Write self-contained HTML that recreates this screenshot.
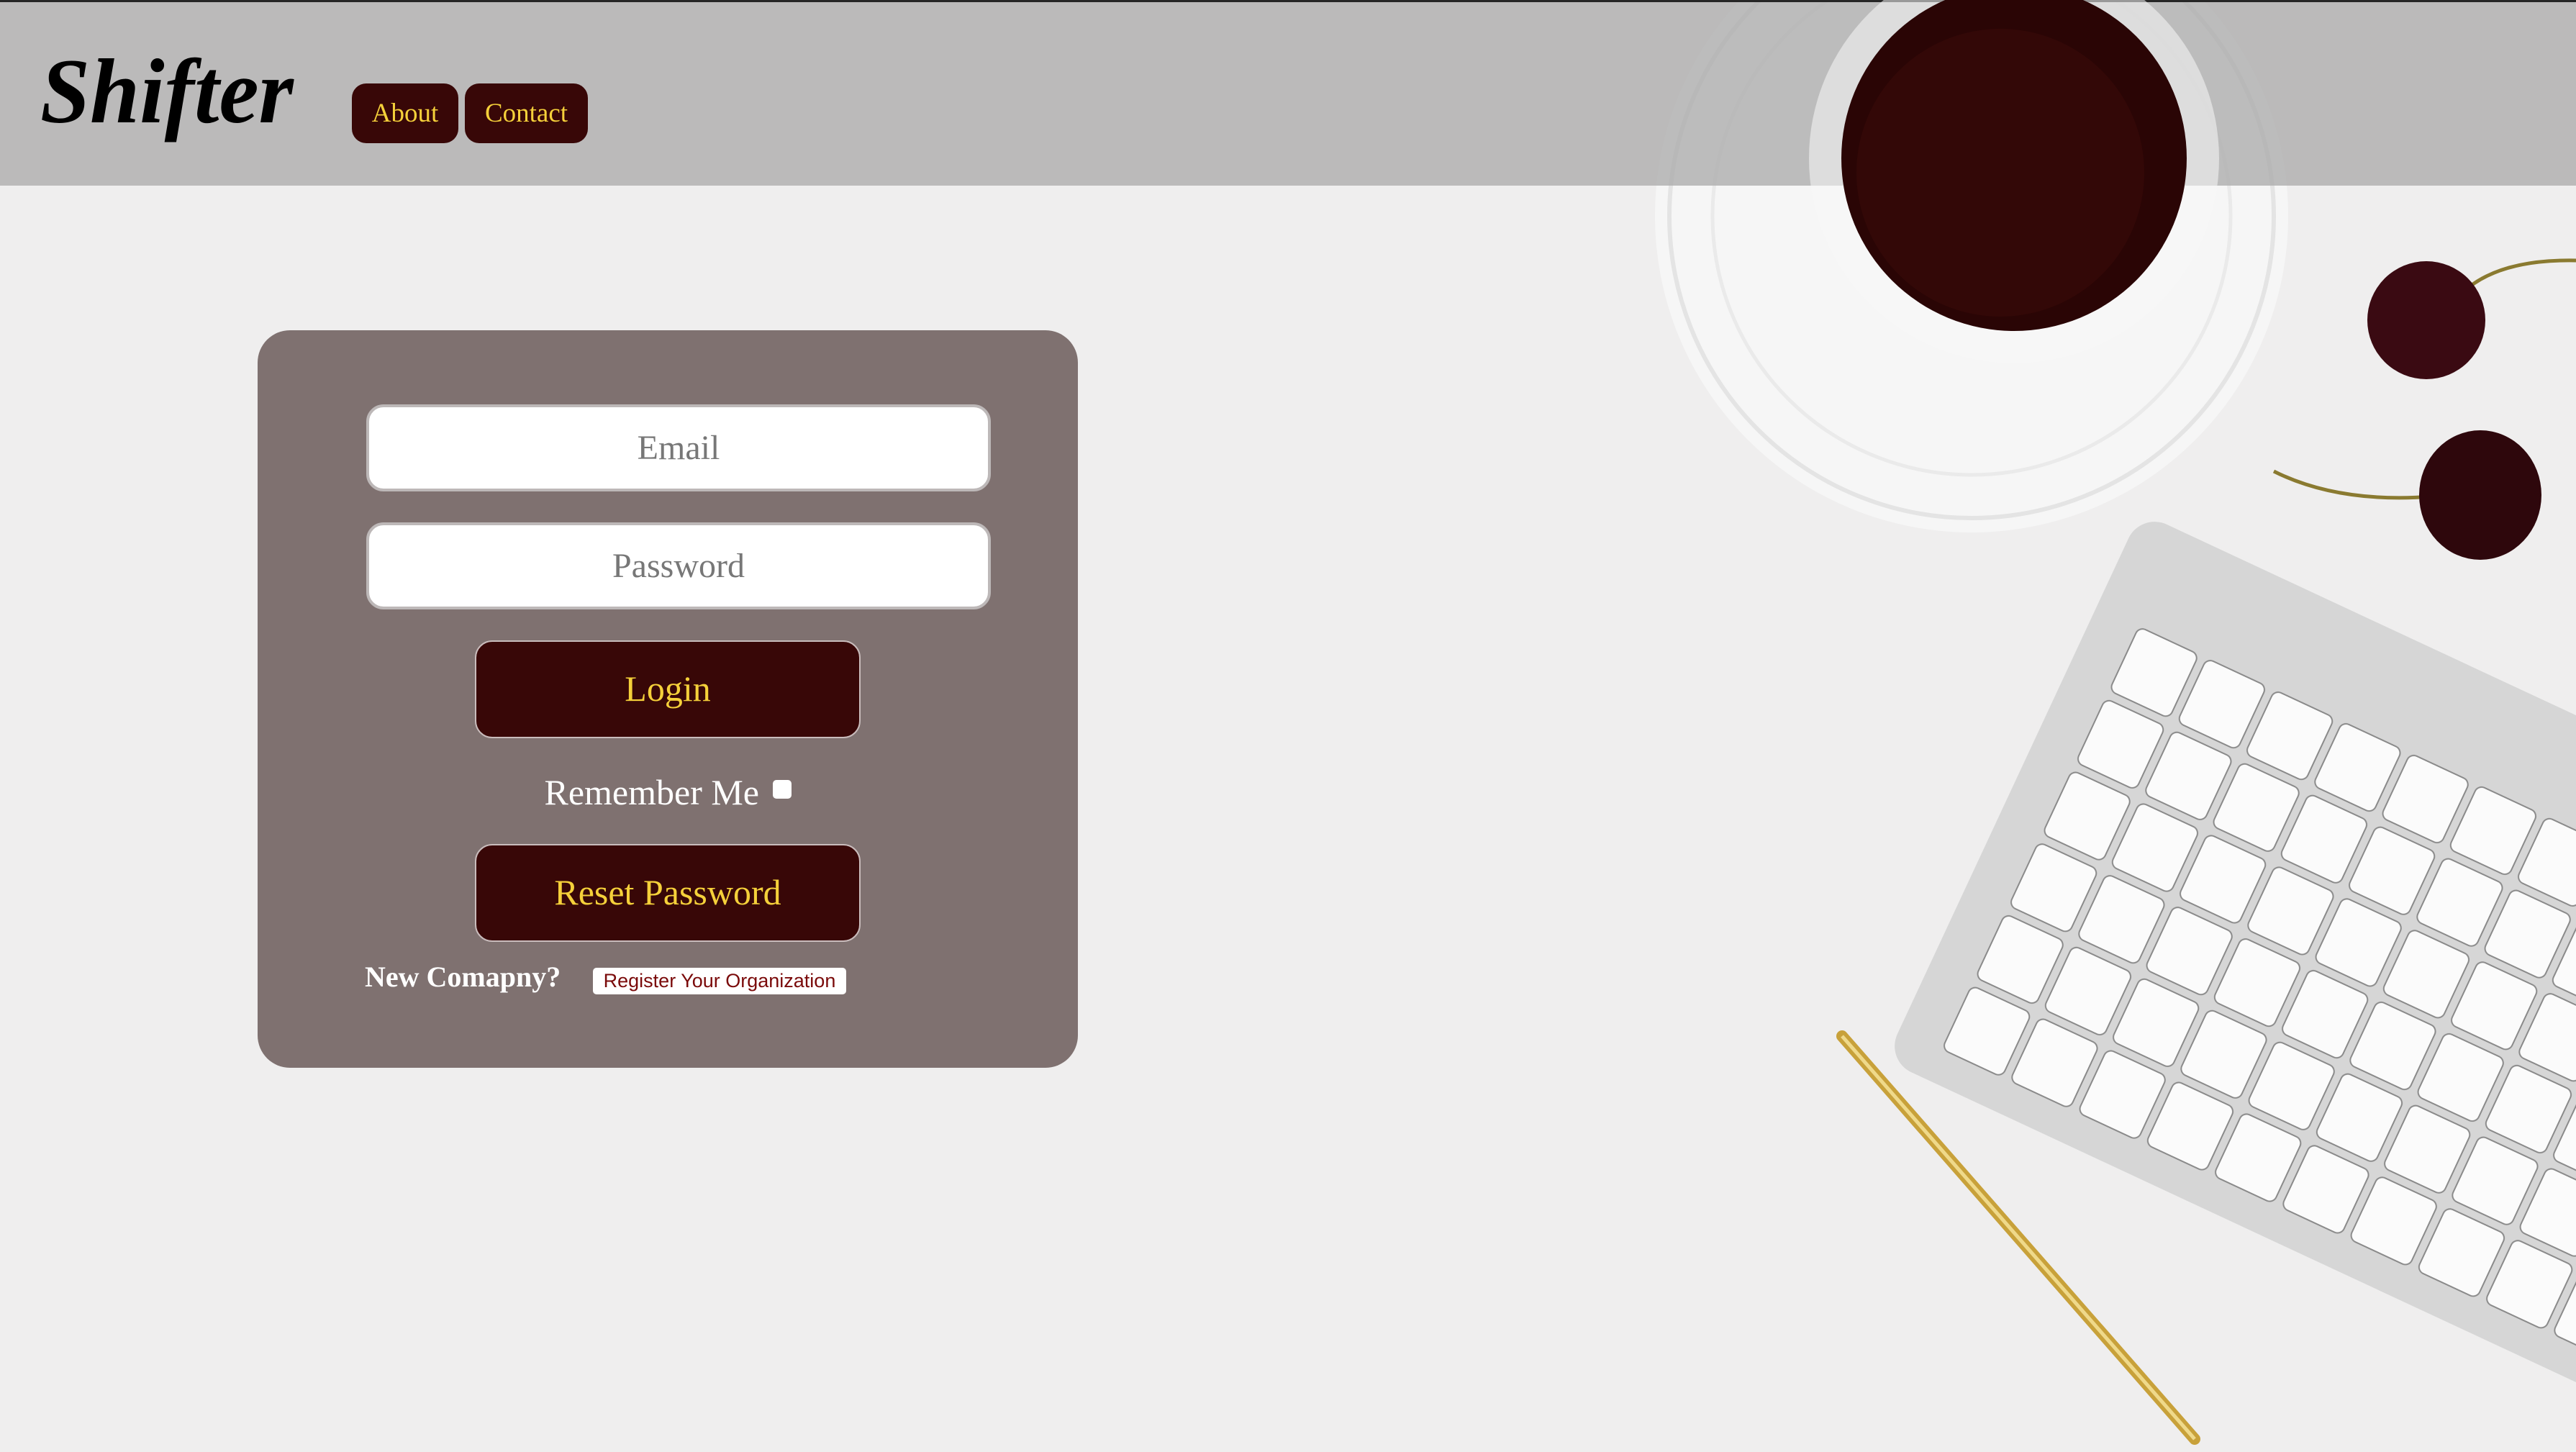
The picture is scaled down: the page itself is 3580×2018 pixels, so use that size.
<!DOCTYPE html>
<html><head><meta charset="utf-8">
<style>
html,body{margin:0;padding:0;width:3580px;height:2018px;overflow:hidden;background:#efeeee;font-family:"Liberation Serif",serif;position:relative}
svg{position:absolute;left:0;top:0;display:block}
.hdr{position:absolute;left:0;top:0;width:3580px;height:258px;background:rgba(172,172,172,0.78);border-top:3px solid #262626;box-sizing:border-box}
.logo{position:absolute;left:56px;top:52px;font:bold italic 128px "Liberation Serif",serif;color:#000;transform:scaleX(0.97);transform-origin:left;line-height:150px}
.nb{position:absolute;top:116px;height:83px;background:#380707;border-radius:20px;color:#f5d03a;font-size:37px;line-height:83px;text-align:center}
.box{position:absolute;left:358px;top:459px;width:1140px;height:1025px;background:#7f7170;border-radius:45px}
.inp{position:absolute;left:151px;width:868px;height:121px;background:#fff;border:4px solid #bdb8b8;box-sizing:border-box;border-radius:24px;text-align:center;color:#777;font-size:48px;line-height:113px}
.btn{position:absolute;left:302px;width:536px;height:136px;background:#380707;border:2px solid #c9bcbc;box-sizing:border-box;border-radius:24px;color:#f5d03a;font-size:50px;line-height:130px;text-align:center}
</style></head><body>
<svg width="3580" height="2018" viewBox="0 0 3580 2018">
<rect width="3580" height="2018" fill="#efeeee"/>
<circle cx="2740" cy="300" r="440" fill="#f6f6f6"/>
<circle cx="2740" cy="300" r="420" fill="none" stroke="#e4e4e4" stroke-width="6"/>
<circle cx="2740" cy="300" r="360" fill="none" stroke="#eaeaea" stroke-width="5"/>
<path d="M3430 400 Q3480 360 3580 362" stroke="#8a7a30" stroke-width="5" fill="none"/>
<ellipse cx="3372" cy="445" rx="82" ry="82" fill="#3a0a12"/>
<path d="M3160 655 Q3250 700 3380 690" stroke="#8a7a30" stroke-width="5" fill="none"/>
<ellipse cx="3447" cy="688" rx="85" ry="90" fill="#2e070c"/>
<g transform="translate(2975,712) rotate(25)">
<defs><pattern id="k" x="60" y="140" width="104" height="110" patternUnits="userSpaceOnUse"><rect x="5" y="5" width="92" height="98" rx="10" fill="#fbfbfb" stroke="#8a8a8a" stroke-width="2"/></pattern></defs>
<rect x="0" y="0" width="1800" height="840" rx="40" fill="#d6d6d6"/>
<rect x="60" y="140" width="1700" height="660" fill="url(#k)"/>
</g>
<line x1="2560" y1="1440" x2="3050" y2="2000" stroke="#c8a13a" stroke-width="16" stroke-linecap="round"/>
<line x1="2560" y1="1440" x2="3050" y2="2000" stroke="#efd98a" stroke-width="5"/>
</svg>
<div class="hdr"></div>
<svg width="3580" height="560" viewBox="0 0 3580 560">
<circle cx="2799" cy="220" r="285" fill="#f8f8f8" opacity="0.55"/>
<circle cx="2799" cy="220" r="240" fill="#2a0505"/>
<circle cx="2780" cy="240" r="200" fill="#3a0a08" opacity="0.6"/>
</svg>
<div class="logo">Shifter</div>
<div class="nb" style="left:489px;width:148px">About</div>
<div class="nb" style="left:646px;width:171px">Contact</div>
<div class="box">
<div class="inp" style="top:103px">Email</div>
<div class="inp" style="top:267px">Password</div>
<div class="btn" style="top:431px">Login</div>
<div style="position:absolute;left:0;width:1140px;top:612px;text-align:center;color:#fff;font-size:50px;line-height:60px">Remember Me <span style="display:inline-block;width:26px;height:26px;background:#fff;border-radius:5px;vertical-align:8px;margin-left:6px"></span></div>
<div class="btn" style="top:714px">Reset Password</div>
<div style="position:absolute;left:149px;top:875px;color:#fff;font-weight:bold;font-size:40px">New Comapny?</div>
<div style="position:absolute;left:466px;top:886px;width:352px;height:37px;background:#fff;border-radius:5px;color:#7a0a0a;font:27px/37px 'Liberation Sans',sans-serif;text-align:center">Register Your Organization</div>
</div>
</body></html>
